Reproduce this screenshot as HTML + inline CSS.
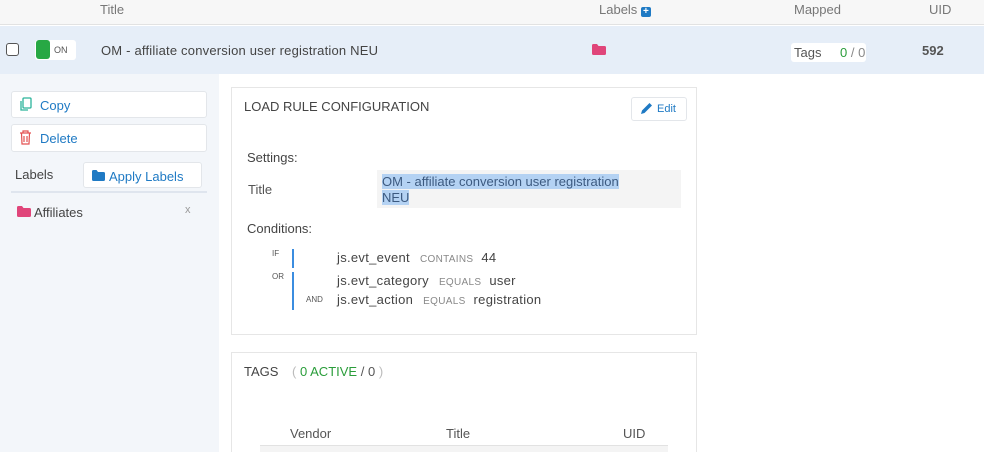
<!DOCTYPE html>
<html><head><style>
*{margin:0;padding:0;box-sizing:border-box}
html,body{width:984px;height:452px;overflow:hidden}
body{background:#fff;font-family:"Liberation Sans",sans-serif;color:#444;position:relative;font-size:13px}
.a{position:absolute;white-space:nowrap}
.btn{position:absolute;background:#fff;border:1px solid #e3e6ea;border-radius:3px;color:#1f7ac4}
.gray{color:#777}
.op{font-size:10px;color:#888;margin:0 8px 0 10px}
</style></head><body>
<div class="a" style="left:0;top:0;width:984px;height:25px;background:#f7f7f7;border-bottom:1px solid #e2e2e2"></div>
<div class="a gray" style="left:100px;top:2px;font-size:13px">Title</div>
<div class="a gray" style="left:599px;top:2px">Labels <span style="display:inline-block;width:10px;height:10px;background:#1f7ac4;border-radius:2px;color:#fff;font-size:10px;line-height:10px;text-align:center;font-weight:bold;vertical-align:0px">+</span></div>
<div class="a gray" style="left:794px;top:2px">Mapped</div>
<div class="a gray" style="left:929px;top:2px">UID</div>

<div class="a" style="left:0;top:26px;width:984px;height:48px;background:#e6eef8"></div>
<div class="a" style="left:6px;top:43px;width:13px;height:13px;border:1px solid #555;border-radius:3px;background:#fff"></div>
<div class="a" style="left:35px;top:40px;width:41px;height:20px;background:#fff;border-radius:3px"></div>
<div class="a" style="left:36px;top:40px;width:14px;height:19px;background:#27a844;border-radius:3px"></div>
<div class="a" style="left:54px;top:45px;font-size:9px;color:#555">ON</div>
<div class="a" style="left:101px;top:43px;font-size:13px;color:#444;letter-spacing:0.2px">OM - affiliate conversion user registration NEU</div>
<svg class="a" style="left:592px;top:44px" width="14" height="11"><path d="M0 1.5Q0 0 1.5 0H5L6.5 2H12.5Q14 2 14 3.5V9.5Q14 11 12.5 11H1.5Q0 11 0 9.5Z" fill="#e0457a"/></svg>
<div class="a" style="left:791px;top:43px;width:75px;height:19px;background:#fff;border-radius:3px"></div>
<div class="a" style="left:794px;top:45px;font-size:13px;color:#555">Tags</div>
<div class="a" style="left:840px;top:45px;font-size:13px"><span style="color:#2a9d3a">0</span><span style="color:#888"> / 0</span></div>
<div class="a" style="left:922px;top:43px;font-size:13px;font-weight:bold;color:#555">592</div>

<div class="a" style="left:0;top:74px;width:219px;height:378px;background:#f3f6fa"></div>
<div class="btn" style="left:11px;top:91px;width:196px;height:27px"></div>
<svg class="a" style="left:19px;top:97px" width="14" height="15"><rect x="4" y="1" width="8" height="10" rx="1" fill="none" stroke="#2bb39b" stroke-width="1.3"/><path d="M2 4V13H9" fill="none" stroke="#2bb39b" stroke-width="1.3"/></svg>
<div class="a" style="left:40px;top:98px;color:#1f7ac4">Copy</div>
<div class="btn" style="left:11px;top:124px;width:196px;height:28px"></div>
<svg class="a" style="left:19px;top:130px" width="13" height="15"><path d="M1 3H12M4 3V1H9V3M2.5 3L3 14H10L10.5 3M5 6V12M8 6V12" fill="none" stroke="#e35050" stroke-width="1.2"/></svg>
<div class="a" style="left:40px;top:131px;color:#1f7ac4">Delete</div>
<div class="a" style="left:15px;top:167px;color:#444">Labels</div>
<div class="btn" style="left:83px;top:162px;width:119px;height:26px"></div>
<svg class="a" style="left:92px;top:170px" width="13" height="11"><path d="M0 1.5Q0 0 1.5 0H4.5L6 2H11.5Q13 2 13 3.5V9.5Q13 11 11.5 11H1.5Q0 11 0 9.5Z" fill="#1f7ac4"/></svg>
<div class="a" style="left:109px;top:169px;color:#1f7ac4">Apply Labels</div>
<div class="a" style="left:11px;top:191px;width:196px;height:2px;background:#dfe5ee"></div>
<svg class="a" style="left:17px;top:206px" width="14" height="11"><path d="M0 1.5Q0 0 1.5 0H5L6.5 2H12.5Q14 2 14 3.5V9.5Q14 11 12.5 11H1.5Q0 11 0 9.5Z" fill="#e0457a"/></svg>
<div class="a" style="left:34px;top:205px;color:#444">Affiliates</div>
<div class="a" style="left:185px;top:204px;font-size:11px;color:#999">x</div>

<div class="a" style="left:231px;top:87px;width:466px;height:248px;border:1px solid #e6e6e6"></div>
<div class="a" style="left:244px;top:99px;font-size:13px;color:#444">LOAD RULE CONFIGURATION</div>
<div class="btn" style="left:631px;top:97px;width:56px;height:24px"></div>
<svg class="a" style="left:640px;top:102px" width="13" height="13"><path d="M1 12L2 8.5L9.5 1L12 3.5L4.5 11Z" fill="#1f7ac4"/></svg>
<div class="a" style="left:657px;top:103px;font-size:11px;color:#1f7ac4">Edit</div>
<div class="a" style="left:247px;top:150px;font-size:13px;color:#444">Settings:</div>
<div class="a" style="left:248px;top:182px;color:#555">Title</div>
<div class="a" style="left:377px;top:170px;width:304px;height:38px;background:#f4f4f4"></div>
<div class="a" style="left:382px;top:174px;line-height:16px;font-size:13px;color:#3c5a80"><span style="background:#b4d2f3">OM - affiliate conversion user registration</span><br><span style="background:#b4d2f3">NEU</span></div>
<div class="a" style="left:247px;top:221px;color:#444">Conditions:</div>
<div class="a" style="left:272px;top:249px;font-size:8px;color:#555">IF</div>
<div class="a" style="left:292px;top:249px;width:2px;height:19px;background:#3b8de0"></div>
<div class="a" style="left:337px;top:250px;color:#444;letter-spacing:0.3px">js.evt_event<span class="op">CONTAINS</span>44</div>
<div class="a" style="left:272px;top:272px;font-size:8px;color:#555">OR</div>
<div class="a" style="left:292px;top:272px;width:2px;height:38px;background:#3b8de0"></div>
<div class="a" style="left:337px;top:273px;color:#444;letter-spacing:0.3px">js.evt_category<span class="op">EQUALS</span>user</div>
<div class="a" style="left:306px;top:295px;font-size:8px;color:#555">AND</div>
<div class="a" style="left:337px;top:292px;color:#444;letter-spacing:0.3px">js.evt_action<span class="op">EQUALS</span>registration</div>

<div class="a" style="left:231px;top:352px;width:466px;height:110px;border:1px solid #e6e6e6"></div>
<div class="a" style="left:244px;top:364px;font-size:13px;color:#444">TAGS <span style="color:#bbb;margin-left:10px">(</span> <span style="color:#2a9d3a">0 ACTIVE</span> <span style="color:#555">/ 0</span> <span style="color:#bbb">)</span></div>
<div class="a" style="left:290px;top:426px;color:#555">Vendor</div>
<div class="a" style="left:446px;top:426px;color:#555">Title</div>
<div class="a" style="left:623px;top:426px;color:#555">UID</div>
<div class="a" style="left:260px;top:445px;width:408px;height:1px;background:#e2e2e2"></div>
<div class="a" style="left:260px;top:446px;width:408px;height:6px;background:#f4f4f4"></div>
</body></html>
